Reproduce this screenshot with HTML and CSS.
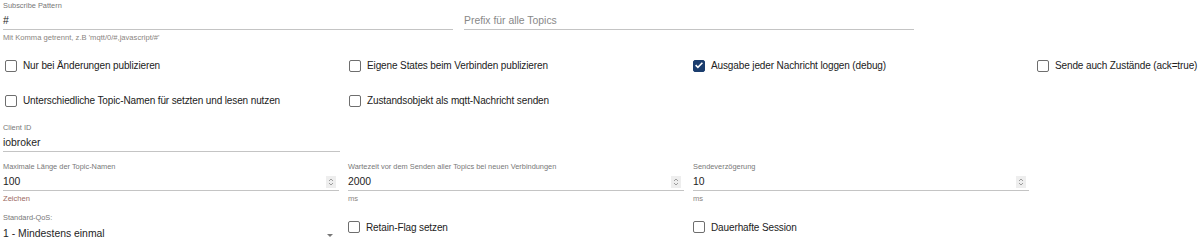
FILE: index.html
```html
<!DOCTYPE html>
<html>
<head>
<meta charset="utf-8">
<link rel="stylesheet" href="styles.css">
</head>
<body>
<div class="top">
  <div class="field wide">
    <div class="lbl">Subscribe Pattern</div>
    <div class="val">#</div>
    <div class="help">Mit Komma getrennt, z.B 'mqtt/0/#,javascript/#'</div>
  </div>
  <div class="field wide">
    <div class="lbl"></div>
    <div class="val ph">Prefix für alle Topics</div>
  </div>
</div>

<div class="grid checks">
  <label class="cb"><span class="box"></span>Nur bei Änderungen publizieren</label>
  <label class="cb"><span class="box"></span>Eigene States beim Verbinden publizieren</label>
  <label class="cb"><span class="box on"><svg viewBox="0 0 12 12" width="12" height="12"><path d="M2.6 6.2 L4.9 8.4 L9.4 3.8" fill="none" stroke="#fff" stroke-width="1.6"/></svg></span>Ausgabe jeder Nachricht loggen (debug)</label>
  <label class="cb"><span class="box"></span>Sende auch Zustände (ack=true)</label>
  <label class="cb"><span class="box"></span>Unterschiedliche Topic-Namen für setzten und lesen nutzen</label>
  <label class="cb"><span class="box"></span>Zustandsobjekt als mqtt-Nachricht senden</label>
</div>

<div class="grid client">
  <div class="field">
    <div class="lbl">Client ID</div>
    <div class="val">iobroker</div>
  </div>
</div>

<div class="grid nums">
  <div class="field">
    <div class="lbl">Maximale Länge der Topic-Namen</div>
    <div class="val"><span>100</span><span class="spin"><svg viewBox="0 0 10 12" width="10" height="12"><path d="M3 5 L5 3 L7 5 M3 7 L5 9 L7 7" fill="none" stroke="#888" stroke-width="0.8"/></svg></span></div>
    <div class="help red">Zeichen</div>
  </div>
  <div class="field">
    <div class="lbl">Wartezeit vor dem Senden aller Topics bei neuen Verbindungen</div>
    <div class="val"><span>2000</span><span class="spin"><svg viewBox="0 0 10 12" width="10" height="12"><path d="M3 5 L5 3 L7 5 M3 7 L5 9 L7 7" fill="none" stroke="#888" stroke-width="0.8"/></svg></span></div>
    <div class="help">ms</div>
  </div>
  <div class="field">
    <div class="lbl">Sendeverzögerung</div>
    <div class="val"><span>10</span><span class="spin"><svg viewBox="0 0 10 12" width="10" height="12"><path d="M3 5 L5 3 L7 5 M3 7 L5 9 L7 7" fill="none" stroke="#888" stroke-width="0.8"/></svg></span></div>
    <div class="help">ms</div>
  </div>
</div>

<div class="grid last">
  <div class="field">
    <div class="lbl">Standard-QoS:</div>
    <div class="val sel"><span>1 - Mindestens einmal</span><span class="arrow"></span></div>
  </div>
  <label class="cb"><span class="box"></span>Retain-Flag setzen</label>
  <label class="cb"><span class="box"></span>Dauerhafte Session</label>
</div>
</body>
</html>
```
FILE: styles.css
```css
* { box-sizing: border-box; }
body {
  margin: 0;
  background: #fff;
  font-family: "Liberation Sans", Arial, sans-serif;
  color: #222;
  width: 1200px;
  height: 242px;
  overflow: hidden;
}
.top {
  display: flex;
  gap: 11px;
  padding-left: 3px;
  height: 48px;
}
.field {
  display: flex;
  flex-direction: column;
}
.wide { width: 450px; }
.lbl {
  font-size: 7.4px;
  line-height: 12px;
  height: 12px;
  color: #777;
}
.val {
  font-size: 10.4px;
  line-height: 17px;
  height: 18px;
  border-bottom: 1px solid #c4c4c4;
  display: flex;
  justify-content: space-between;
  align-items: center;
  color: #1e1e1e;
}
.val.ph { color: #888; }
.help {
  font-size: 7.6px;
  line-height: 10px;
  margin-top: 3px;
  color: #8a8580;
}
.help.red { color: #9b6a62; }
.grid {
  display: grid;
  grid-template-columns: 337px 337px 337px minmax(0, 1fr);
  column-gap: 8px;
  padding-left: 3px;
}
.checks {
  grid-auto-rows: 35px;
  column-gap: 7px;
  padding-left: 3px;
}
.cb {
  display: flex;
  align-items: center;
  padding-left: 2px;
  font-size: 10px;
  letter-spacing: -0.12px;
  color: #222;
  white-space: nowrap;
}
.box {
  width: 12px;
  height: 12px;
  border: 1.5px solid #6e6e6e;
  border-radius: 2px;
  margin-right: 6px;
  flex: none;
  display: flex;
}
.box.on {
  background: #1b3d6e;
  border-color: #1b3d6e;
}
.box.on svg { margin: -1.5px; }
.client { margin-top: 4px; }
.client .field { width: 337px; }
.nums { margin-top: 9px; }
.nums .field { width: 336px; }
.spin {
  width: 10px;
  height: 12px;
  background: #eee;
  margin-right: 3px;
  display: flex;
}
.last {
  margin-top: 8px;
  align-items: center;
}
.last .cb { padding-left: 0; }
.sel { border-bottom: none; }
.arrow {
  width: 0;
  height: 0;
  border-left: 3.5px solid transparent;
  border-right: 3.5px solid transparent;
  border-top: 3.5px solid #777;
  margin-right: 7px;
  margin-top: 4px;
}
```
